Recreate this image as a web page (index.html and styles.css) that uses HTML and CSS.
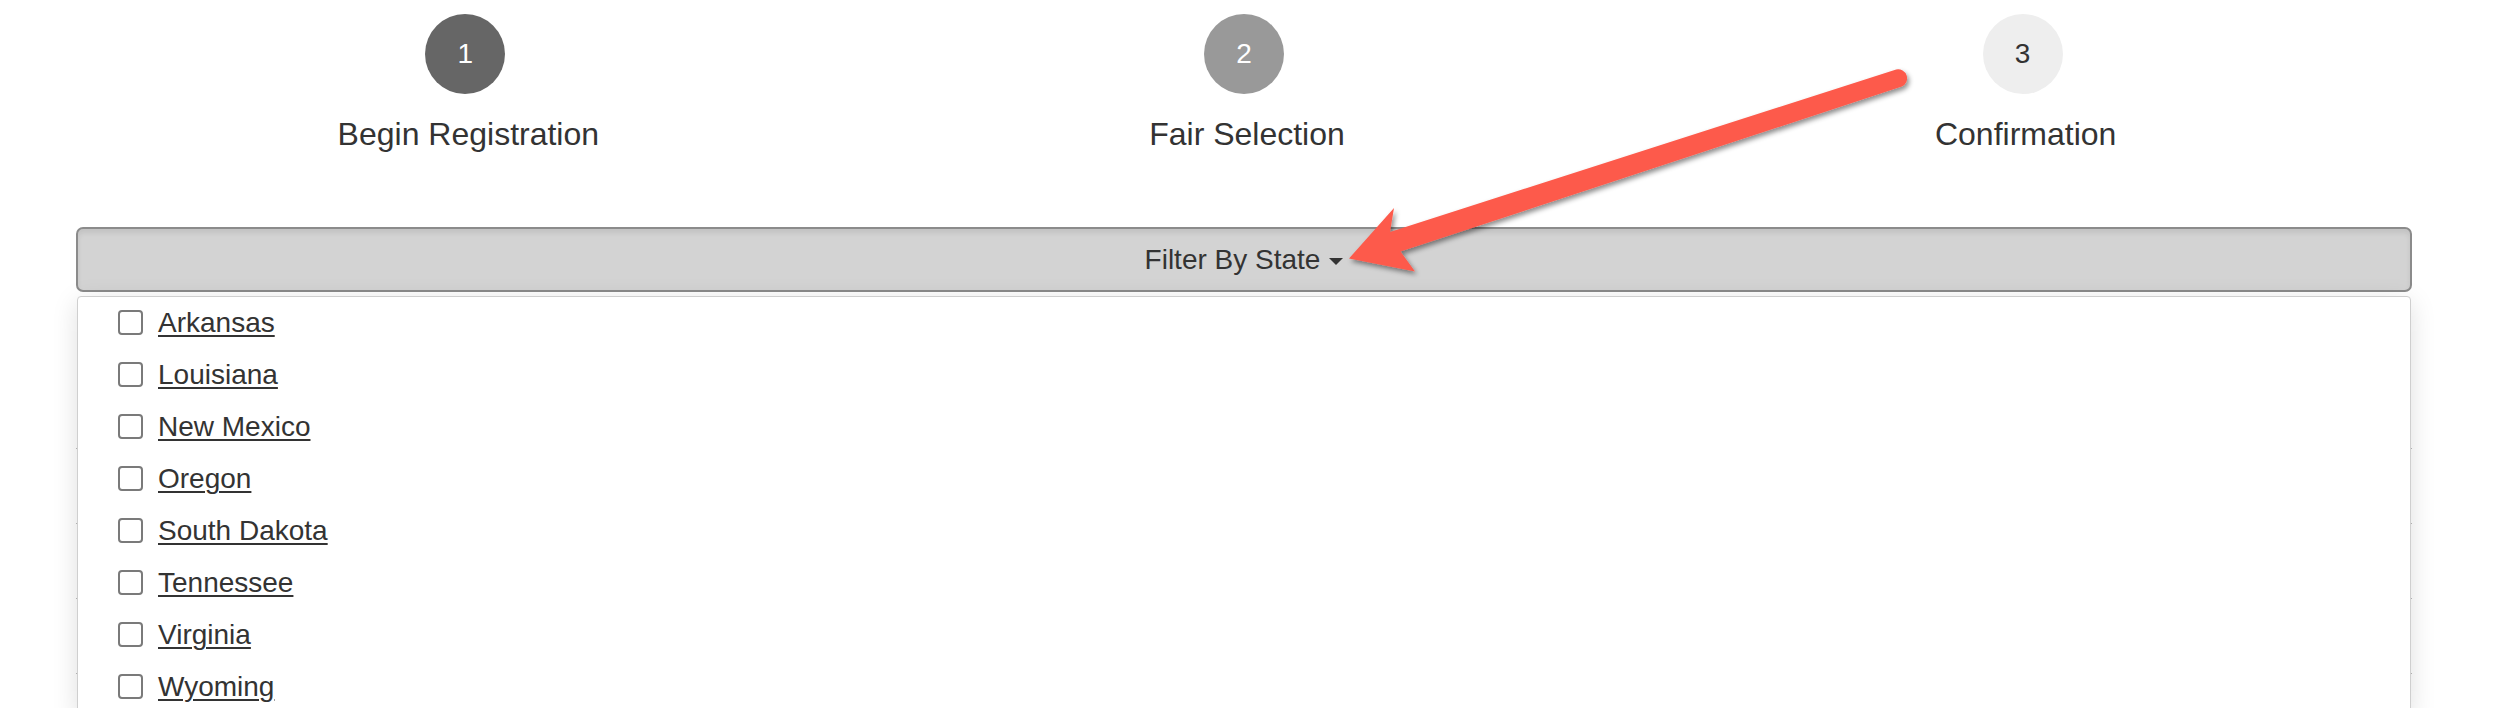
FILE: index.html
```html
<!DOCTYPE html>
<html>
<head>
<meta charset="utf-8">
<title>Fair Registration</title>
<link rel="stylesheet" href="styles.css">
</head>
<body>
<div class="page">
  <div class="steps">
    <div class="step">
      <div class="step-circle step-active">1</div>
      <div class="step-title">Begin Registration</div>
    </div>
    <div class="step">
      <div class="step-circle step-next">2</div>
      <div class="step-title">Fair Selection</div>
    </div>
    <div class="step">
      <div class="step-circle step-todo">3</div>
      <div class="step-title">Confirmation</div>
    </div>
  </div>

  <div class="filter">
    <button class="filter-btn" type="button">Filter By State <span class="caret"></span></button>
    <div class="content">
      <div class="row"></div>
      <div class="row"></div>
      <div class="row"></div>
      <div class="row"></div>
      <div class="row"></div>
    </div>
    <ul class="dropdown">
      <li class="item"><span class="box"></span><a class="state">Arkansas</a></li>
      <li class="item"><span class="box"></span><a class="state">Louisiana</a></li>
      <li class="item"><span class="box"></span><a class="state">New Mexico</a></li>
      <li class="item"><span class="box"></span><a class="state">Oregon</a></li>
      <li class="item"><span class="box"></span><a class="state">South Dakota</a></li>
      <li class="item"><span class="box"></span><a class="state">Tennessee</a></li>
      <li class="item"><span class="box"></span><a class="state">Virginia</a></li>
      <li class="item"><span class="box"></span><a class="state">Wyoming</a></li>
    </ul>
  </div>
</div>

<svg class="annotation" width="2502" height="708" viewBox="0 0 2502 708">
  <defs>
    <filter id="shadow" x="-10%" y="-10%" width="130%" height="140%">
      <feDropShadow dx="2" dy="3" stdDeviation="2.5" flood-color="#000" flood-opacity="0.45"/>
    </filter>
  </defs>
  <path filter="url(#shadow)" fill="#fd5a4b"
        d="M1896.2,69.5 L1390,232 L1394,208 L1349,258.5 L1415,271.5 L1400.5,251.6 L1901.8,86.5 A9,9 0 0 0 1896.2,69.5 Z"/>
</svg>
</body>
</html>
```

FILE: styles.css
```css
html, body {
  margin: 0;
  padding: 0;
  height: 708px;
  overflow: hidden;
  background: #fff;
}

body {
  font-family: "Liberation Sans", Arial, sans-serif;
  color: #333;
  position: relative;
}

.page {
  width: 2336px;
  margin-left: 76px;
}

.steps {
  display: grid;
  grid-template-columns: repeat(3, 1fr);
  padding-top: 14px;
}

.step {
  display: flex;
  flex-direction: column;
  align-items: center;
}

.step-circle {
  width: 80px;
  height: 80px;
  border-radius: 50%;
  display: flex;
  align-items: center;
  justify-content: center;
  font-size: 28px;
  line-height: 1;
}

.step-active {
  background: #666;
  color: #fff;
}

.step-next {
  background: #999;
  color: #fff;
}

.step-todo {
  background: #eee;
  color: #333;
}

.step-title {
  margin-top: 22px;
  font-size: 32px;
  line-height: 37px;
  color: #333;
  padding-left: 6px;
}

.filter {
  position: relative;
  margin-top: 74px;
}

.filter-btn {
  display: flex;
  align-items: center;
  justify-content: center;
  width: 100%;
  height: 65px;
  box-sizing: border-box;
  margin: 0;
  padding: 0;
  background: #d3d3d3;
  border: 2px solid #8b8b8b;
  border-radius: 7px;
  box-shadow: inset 0 4px 5px rgba(0, 0, 0, 0.08);
  font-family: "Liberation Sans", Arial, sans-serif;
  font-size: 28px;
  color: #333;
}

.caret {
  display: inline-block;
  width: 0;
  height: 0;
  margin-left: 9px;
  margin-top: 3px;
  border-left: 7.5px solid transparent;
  border-right: 7.5px solid transparent;
  border-top: 7px solid #333;
}

.content {
  padding-top: 6px;
}

.row {
  height: 74px;
  border-top: 1px solid #bbb;
}

.row:first-child {
  height: 150px;
  border-top: none;
}

.dropdown {
  position: absolute;
  top: 69px;
  left: 1px;
  right: 1px;
  margin: 0;
  padding: 0;
  list-style: none;
  background: #fff;
  border: 1px solid #cfcfcf;
  border-radius: 4px 4px 0 0;
  box-shadow: 0 6px 26px rgba(0, 0, 0, 0.13);
}

.item {
  display: flex;
  align-items: center;
  height: 52px;
  padding-left: 40px;
}

.box {
  width: 25px;
  height: 25px;
  box-sizing: border-box;
  border: 2px solid #7a7a7a;
  border-radius: 4px;
  margin-top: -1px;
  margin-right: 15px;
  background: #fff;
}

.state {
  font-size: 28px;
  color: #333;
  text-decoration: underline;
  text-decoration-thickness: 2px;
  text-underline-offset: 3px;
}

.annotation {
  position: absolute;
  top: 0;
  left: 0;
  pointer-events: none;
}
```
